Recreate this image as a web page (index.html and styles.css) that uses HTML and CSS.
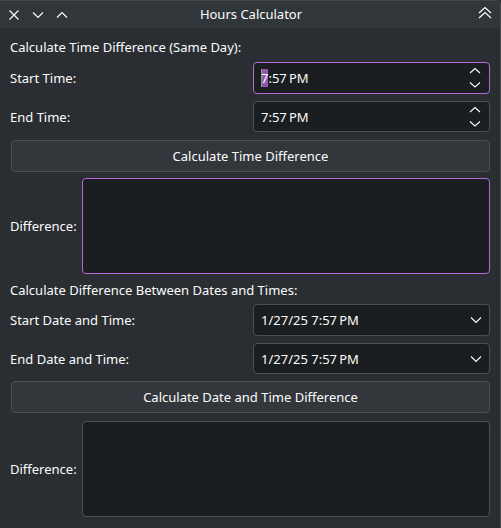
FILE: index.html
```html
<!DOCTYPE html>
<html>
<head>
<meta charset="utf-8">
<link rel="stylesheet" href="styles.css">
</head>
<body>
<div class="window">
  <header class="titlebar">
    <div class="tb-buttons">
      <svg class="tb-icon" width="24" height="28" viewBox="0 0 24 28"><path d="M9.5 9.5 L18.5 18.5 M18.5 9.5 L9.5 18.5" stroke="#fcfcfc" stroke-width="1.2" fill="none"/></svg>
      <svg class="tb-icon" width="24" height="28" viewBox="0 0 24 28"><path d="M9 11.5 L14 16.5 L19 11.5" stroke="#fcfcfc" stroke-width="1.2" fill="none"/></svg>
      <svg class="tb-icon" width="24" height="28" viewBox="0 0 24 28"><path d="M9 16.5 L14 11.5 L19 16.5" stroke="#fcfcfc" stroke-width="1.2" fill="none"/></svg>
    </div>
    <div class="title">Hours Calculator</div>
    <div class="tb-right">
      <svg width="16" height="28" viewBox="0 0 16 28"><path d="M2 13 L8 7.5 L14 13 M2 18 L8 12.5 L14 18" stroke="#fcfcfc" stroke-width="1.2" fill="none"/></svg>
    </div>
  </header>
  <main class="content">
    <div class="heading h1">Calculate Time Difference (Same Day):</div>
    <div class="row r-start">
      <div class="label">Start Time:</div>
      <div class="field focus">
        <span class="value"><span class="caret"></span><span class="sel">7</span>:57&#8239;PM</span>
        <svg class="spin" width="12" height="22" viewBox="0 0 12 22"><path d="M1 6 L6 1.5 L11 6 M1 15.5 L6 20 L11 15.5" stroke="#fcfcfc" stroke-width="1.1" fill="none"/></svg>
      </div>
    </div>
    <div class="row r-end">
      <div class="label">End Time:</div>
      <div class="field">
        <span class="value">7:57&#8239;PM</span>
        <svg class="spin" width="12" height="22" viewBox="0 0 12 22"><path d="M1 6 L6 1.5 L11 6 M1 15.5 L6 20 L11 15.5" stroke="#fcfcfc" stroke-width="1.1" fill="none"/></svg>
      </div>
    </div>
    <button class="btn b1">Calculate Time Difference</button>
    <div class="diff d1">
      <div class="dlabel">Difference:</div>
      <div class="area focus"></div>
    </div>
    <div class="heading h2">Calculate Difference Between Dates and Times:</div>
    <div class="row r-sdate">
      <div class="label">Start Date and Time:</div>
      <div class="field">
        <span class="value">1/27/25 7:57&#8239;PM</span>
        <svg class="drop" width="12" height="8" viewBox="0 0 12 8"><path d="M1 1.5 L6 6.5 L11 1.5" stroke="#fcfcfc" stroke-width="1.1" fill="none"/></svg>
      </div>
    </div>
    <div class="row r-edate">
      <div class="label">End Date and Time:</div>
      <div class="field">
        <span class="value">1/27/25 7:57&#8239;PM</span>
        <svg class="drop" width="12" height="8" viewBox="0 0 12 8"><path d="M1 1.5 L6 6.5 L11 1.5" stroke="#fcfcfc" stroke-width="1.1" fill="none"/></svg>
      </div>
    </div>
    <button class="btn b2">Calculate Date and Time Difference</button>
    <div class="diff d2">
      <div class="dlabel">Difference:</div>
      <div class="area"></div>
    </div>
  </main>
</div>
</body>
</html>
```
FILE: styles.css
```css
html, body {
  margin: 0;
  padding: 0;
  background: #2a2e32;
}
body {
  font-family: "Noto Sans", "DejaVu Sans", sans-serif;
  font-size: 13px;
  color: #fcfcfc;
}
.window {
  width: 501px;
  height: 528px;
  box-sizing: border-box;
  background: #2a2e32;
  border-right: 1px solid #4a4e53;
  border-top: 1px solid #43474c;
  border-radius: 0 5px 0 0;
  overflow: hidden;
}
.titlebar {
  height: 27px;
  background: #31363b;
  display: flex;
  align-items: center;
  position: relative;
}
.tb-buttons {
  display: flex;
  width: 120px;
}
.tb-icon {
  display: block;
}
.title {
  flex: 1;
  text-align: center;
  line-height: 27px;
  padding-left: 2px;
}
.tb-right {
  width: 120px;
  display: flex;
  justify-content: flex-end;
  padding-right: 7px;
  box-sizing: border-box;
}
.tb-right svg {
  display: block;
  margin-top: -1px;
}
.content {
  padding: 10px 10px 0 11px;
  display: flex;
  flex-direction: column;
}
.heading {
  line-height: 18px;
  margin-left: -1px;
}
.row {
  display: flex;
  align-items: center;
}
.label {
  flex: 1;
  margin-left: -1px;
}
.field {
  width: 237px;
  height: 31px;
  box-sizing: border-box;
  background: #1b1e20;
  border: 1px solid #4c5055;
  border-radius: 4px;
  display: flex;
  align-items: center;
  justify-content: space-between;
  padding: 0 7px;
  position: relative;
}
.field.focus,
.area.focus {
  border-color: #b468d9;
}
.value {
  line-height: 18px;
  position: relative;
}
.sel {
  background: #9457b1;
  color: #fcfcfc;
  display: inline-block;
}
.caret {
  position: absolute;
  left: 0;
  top: 0;
  width: 1px;
  height: 18px;
  background: #7da37b;
}
.spin {
  display: block;
  margin-right: 1px;
}
.drop {
  display: block;
}
.r-start { margin-top: 6px; }
.r-start .field { height: 32px; }
.r-end { margin-top: 7px; }
.btn {
  font-family: inherit;
  font-size: 13px;
  color: #fcfcfc;
  background: #33373c;
  border: 1px solid #4c5055;
  border-radius: 4px;
  height: 32px;
  width: 100%;
  padding: 0;
  margin: 0;
}
.b1 { margin-top: 8px; }
.diff {
  display: flex;
  align-items: center;
}
.dlabel {
  width: 72px;
  margin-left: -1px;
}
.area {
  flex: 1;
  height: 96px;
  box-sizing: border-box;
  background: #1b1e20;
  border: 1px solid #4c5055;
  border-radius: 4px;
}
.d1 { margin-top: 6px; }
.h2 { margin-top: 7px; }
.r-sdate { margin-top: 5px; }
.r-sdate .field { height: 32px; }
.r-edate { margin-top: 7px; }
.b2 { margin-top: 7px; }
.d2 { margin-top: 8px; }
```
